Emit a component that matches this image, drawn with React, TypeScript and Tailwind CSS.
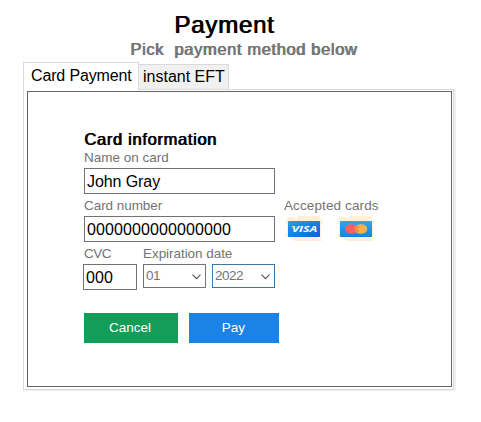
import React from "react";

const label = "block pt-px h-4 text-[13.5px] leading-4 text-[#737373] whitespace-pre";
const input = "h-[26px] border border-[#737373] bg-white pt-px pl-[2px] text-[16px] leading-[23px] text-black outline-none";

function Backdrop() {
  return (
    <g fill="#fdf0d6">
      <rect x="2" y="1" width="9" height="2" rx="1" />
      <rect x="12" y="0" width="23" height="3" rx="1.5" />
      <rect x="0" y="5" width="38" height="3" rx="1.5" />
      <rect x="2" y="3" width="34" height="18" />
      <rect x="0" y="18" width="4" height="3" rx="1" />
      <rect x="7" y="21" width="26" height="3" rx="1" />
      <rect x="9" y="23" width="28" height="2" rx="1" />
    </g>
  );
}

function Visa() {
  return (
    <svg width="38" height="26" viewBox="0 0 38 26">
      <defs>
        <linearGradient id="visa" x1="0" y1="0" x2="1" y2="1">
          <stop offset="0" stopColor="#229df0" />
          <stop offset="1" stopColor="#1360d2" />
        </linearGradient>
      </defs>
      <Backdrop />
      <rect x="3" y="5" width="32" height="16" rx="0.8" fill="url(#visa)" />
      <text x="6.8" y="16" textLength="25.5" lengthAdjust="spacingAndGlyphs" fontSize="8.2" fontWeight="700" fontStyle="italic" fill="#fff" fontFamily="Open Sans, sans-serif">
        VISA
      </text>
      <path d="M6 10h3l1 3z" fill="#f5d67c" />
    </svg>
  );
}

function Mastercard() {
  return (
    <svg width="38" height="26" viewBox="0 0 38 26">
      <defs>
        <linearGradient id="mc" x1="0" y1="0" x2="0" y2="1">
          <stop offset="0" stopColor="#2ba9ee" />
          <stop offset="1" stopColor="#1b7fe0" />
        </linearGradient>
      </defs>
      <Backdrop />
      <rect x="3" y="5" width="32" height="16" rx="0.8" fill="url(#mc)" />
      <ellipse cx="14.3" cy="13" rx="6.2" ry="4.8" fill="#fb5f66" />
      <ellipse cx="23.9" cy="13" rx="6.4" ry="4.8" fill="#fdb04e" />
      <path d="M17 11h5M16.5 13h4.5M17 15h5" stroke="#f4645c" strokeWidth="1" />
    </svg>
  );
}

function Select({ value, active }: { value: string; active?: boolean }) {
  return (
    <div className={`flex h-6 w-[63px] items-center justify-between border pr-[4px] pl-[2px] ${active ? "border-[#3f78a6]" : "border-[#737373]"}`}>
      <span className="-mt-px text-[13.5px] leading-4 tracking-[-0.5px] text-[#737373]">{value}</span>
      <svg width="9" height="6" viewBox="0 0 9 6" className="mt-[2px]" fill="none" stroke="#555" strokeWidth="1.15">
        <path d="M.5.7 4.5 4.7 8.5.7" />
      </svg>
    </div>
  );
}

export default function App() {
  return (
    <main className="flex h-[422px] w-[481px] flex-col overflow-hidden bg-white font-['Liberation_Sans',Arial,sans-serif]">
      <header className="h-[62px] pt-[10px]">
        <h1 className="h-[29px] pl-[174px] text-[24px] leading-[30px] tracking-[0.8px] text-black [text-shadow:0.9px_0_0_#000]">Payment</h1>
        <p className="pl-[130px] text-[16.5px] leading-5 tracking-[0.62px] whitespace-pre text-[#737373] [text-shadow:0.9px_0_0_#737373]">Pick  payment method below</p>
      </header>
      <nav className="z-10 ml-[23px] flex h-7 items-end">
        <button className="h-7 w-[116px] border border-b-0 border-[#dadada] bg-white pb-[2px] pl-[7px] text-left text-[16px] leading-5 tracking-[-0.15px] whitespace-nowrap">Card Payment</button>
        <button className="h-[26px] w-[90px] border border-l-0 border-[#dadada] bg-[#f0f0f0] pl-[4px] text-left text-[16px] leading-5 whitespace-nowrap">instant EFT</button>
      </nav>
      <section className="-mt-px ml-[23px] h-[302px] w-[433px] border-r-2 border-b border-[#f0f0f0]">
        <div className="h-[301px] w-[431px] border border-[#dadada] pt-px pr-px pb-[2px] pl-[3px]">
          <div className="h-[296px] w-[425px] border border-[#646464] pt-[38px] pl-[56px]">
            <h2 className="h-[19px] text-[16.5px] leading-[18px] tracking-[0.67px] text-black [text-shadow:0.9px_0_0_#000]">Card information</h2>
            <label className={label}>Name on card</label>
            <input className={`${input} mt-[3px] block w-[191px] tracking-[-0.08px]`} defaultValue="John Gray" />
            <div className="mt-[3px] flex gap-[9px]">
              <div>
                <label className={`${label} tracking-[-0.05px]`}>Card number</label>
                <input className={`${input} mt-[3px] block w-[191px] tracking-[0.1px]`} defaultValue="0000000000000000" />
              </div>
              <div>
                <span className={`${label} tracking-[0.12px]`}>Accepted cards</span>
                <div className="mt-[3px] flex h-[26px] gap-[14px] pl-px">
                  <Visa />
                  <Mastercard />
                </div>
              </div>
            </div>
            <div className="mt-[3px] flex">
              <div className="w-[59px]">
                <label className={`${label} tracking-[-0.5px]`}>CVC</label>
                <input className={`${input} mt-[3px] -ml-px block w-[54px] tracking-[0.1px]`} defaultValue="000" />
              </div>
              <div>
                <span className={`${label} tracking-[-0.05px]`}>Expiration date</span>
                <div className="mt-[3px] flex gap-[6px]">
                  <Select value="01" />
                  <Select value="2022" active />
                </div>
              </div>
            </div>
            <div className="mt-[23px] flex gap-[11px] text-[13.5px] text-white">
              <button className="h-[30px] w-[94px] bg-[#129d58] pt-px pr-[2px]">Cancel</button>
              <button className="h-[30px] w-[90px] bg-[#1b82e6] pt-px pr-px">Pay</button>
            </div>
          </div>
        </div>
      </section>
    </main>
  );
}
